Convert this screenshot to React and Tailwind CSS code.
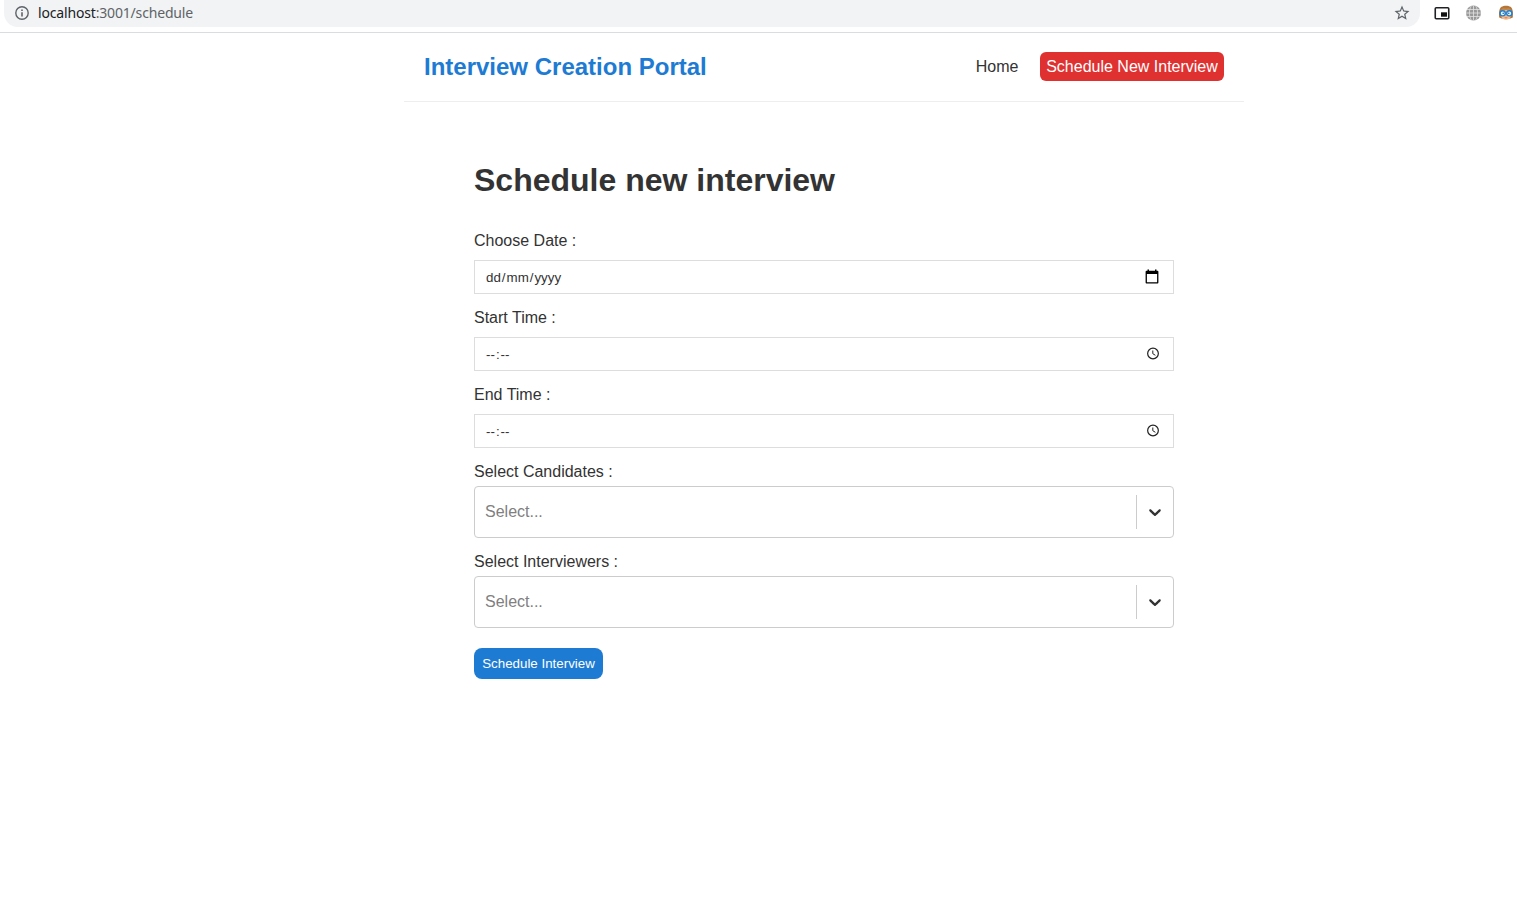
import React from "react";

function InfoIcon() {
  return (
    <svg width="14" height="14" viewBox="0 0 14 14" fill="none">
      <circle cx="7" cy="7" r="6.2" stroke="#5f6368" strokeWidth="1.4" />
      <path d="M7 6.2v4.2M7 3.5v1.5" stroke="#5f6368" strokeWidth="1.6" />
    </svg>
  );
}

function StarIcon() {
  return (
    <svg width="18" height="18" viewBox="0 0 24 24" fill="#5f6368">
      <path d="M22 9.24l-7.19-.62L12 2 9.19 8.63 2 9.24l5.46 4.73L5.82 21 12 17.27 18.18 21l-1.63-7.03L22 9.24zM12 15.4l-3.76 2.27 1-4.28-3.32-2.88 4.38-.38L12 6.1l1.71 4.04 4.38.38-3.32 2.88 1 4.28L12 15.4z" />
    </svg>
  );
}

function PipIcon() {
  return (
    <svg width="16" height="14" viewBox="0 0 16 14" fill="none">
      <rect x="1.25" y="1.75" width="13.5" height="11" rx="1" stroke="#202124" strokeWidth="1.6" />
      <rect x="7" y="6.3" width="6" height="4.4" fill="#111" />
    </svg>
  );
}

function GlobeIcon() {
  return (
    <svg className="-mt-px" width="16" height="16" viewBox="0 0 16 16" fill="none">
      <circle cx="7.5" cy="8" r="7.5" fill="#999" />
      <path
        d="M7.5 .5v15M0 8h15M1 4.500h13M1 11.500h13M5.300 .8C2.800 5 2.800 11 5.300 15.200M9.700 .8c2.500 4.200 2.500 10.200 0 14.400"
        stroke="#e3e3e3"
        strokeWidth="0.8"
      />
    </svg>
  );
}

function AvatarIcon() {
  return (
    <svg width="16" height="16" viewBox="0 0 16 16">
      <path d="M1.200 12.500C.8 8 1 3.500 3.500 1.800 5.500 .3 10.500 .3 12.500 1.800 15 3.500 15.200 8 14.800 12.500L12.500 13.500H3.500Z" fill="#b5763a" />
      <path d="M3 6Q8 3.500 13 6V10.500Q12 14.800 8 14.800T3 10.500Z" fill="#f3b98c" />
      <path d="M2.500 6.500Q4 1.500 8 3.500Q12 1.500 13.500 6.500L8 4.800Z" fill="#c58748" />
      <circle cx="4.700" cy="8.300" r="2.600" fill="#eaf7ff" stroke="#1f7fd0" strokeWidth="1.400" />
      <circle cx="11.300" cy="8.300" r="2.600" fill="#eaf7ff" stroke="#1f7fd0" strokeWidth="1.400" />
      <circle cx="5.200" cy="8.300" r=".8" fill="#1d5f9e" />
      <circle cx="10.800" cy="8.300" r=".8" fill="#1d5f9e" />
      <path d="M6.700 12.500Q8 13.300 9.300 12.500" stroke="#c8644a" strokeWidth="0.700" fill="none" />
    </svg>
  );
}

function CalendarIcon() {
  return (
    <svg className="mr-3.5 mb-px" width="14" height="15" viewBox="0 0 14 15" fill="#000">
      <path fillRule="evenodd" d="M1.500 1.800H2.500V.5H4V1.800H10V.5H11.500V1.800H12.500Q13.400 1.800 13.400 2.700V13.500Q13.400 14.500 12.500 14.500H1.500Q.6 14.500 .6 13.500V2.700Q.6 1.800 1.500 1.800ZM1.900 5V13.300H12.100V5Z" />
    </svg>
  );
}

function ClockIcon() {
  return (
    <svg className="mr-3.5 mb-px" width="12" height="13" viewBox="0 0 12 13" fill="none" stroke="#222">
      <circle cx="6" cy="6.500" r="5.350" strokeWidth="1.200" />
      <path d="M5.800 3.500V6.700L8.400 8.300" strokeWidth="1" />
    </svg>
  );
}

function DateValue() {
  return (
    <span className="flex pt-px">
      <span className="pr-px">dd</span>
      <span>/</span>
      <span className="px-px">mm</span>
      <span>/</span>
      <span className="pl-px">yyyy</span>
    </span>
  );
}

function TimeValue() {
  return (
    <span className="flex pt-px">
      <span className="pr-px">--</span>
      <span>:</span>
      <span className="pl-px">--</span>
    </span>
  );
}

function InputField({ label, icon, children }) {
  return (
    <div className="flex h-[77px] flex-col">
      <label className="h-7 leading-[18px]">{label}</label>
      <div className="flex h-[34px] items-center justify-between border border-[#ddd] pl-[11px] text-[13.333px] leading-[15px]">
        {children}
        {icon}
      </div>
    </div>
  );
}

function SelectField({ label }) {
  return (
    <div className="flex h-[90px] flex-col">
      <label className="h-[23px] leading-[18px]">{label}</label>
      <div className="flex h-[52px] items-center rounded border border-[#ccc]">
        <span className="flex-1 pl-2.5 leading-[18px] text-[#808080]">Select...</span>
        <span className="h-[34px] w-px bg-[#ccc]" />
        <span className="flex w-9 justify-center">
          <svg width="20" height="20" viewBox="0 0 20 20" fill="#333">
            <path d="M4.516 7.548c0.436-0.446 1.043-0.481 1.576 0l3.908 3.747 3.908-3.747c0.533-0.481 1.141-0.446 1.574 0 0.436 0.445 0.408 1.197 0 1.615-0.406 0.418-4.695 4.502-4.695 4.502-0.217 0.223-0.502 0.335-0.787 0.335s-0.570-0.112-0.789-0.335c0 0-4.287-4.084-4.695-4.502s-0.436-1.170 0-1.615z" />
          </svg>
        </span>
      </div>
    </div>
  );
}

export default function App() {
  return (
    <div className="h-[921px] w-[1517px] overflow-hidden bg-white font-['Liberation_Sans',Arial,sans-serif] text-base text-[#333]">
      <div className="flex h-[33px] items-start border-b border-[#dadce0] pl-1">
        <div className="flex h-[27px] w-[1416px] items-center rounded-b-[14px] bg-[#f1f3f4] pr-[9px] pl-[11px]">
          <span className="-mt-px"><InfoIcon /></span>
          <span className="-mt-px ml-[9px] flex-1 font-['Noto_Sans',sans-serif] text-[14px] leading-5 tracking-[-0.17px] text-[#5f6368]">
            <span className="text-[#202124]">localhost</span>:3001/schedule
          </span>
          <span className="-mt-px"><StarIcon /></span>
        </div>
        <div className="flex h-[26px] items-center gap-4 pl-3.5">
          <PipIcon />
          <GlobeIcon />
          <AvatarIcon />
        </div>
      </div>
      <header className="ml-[404px] flex h-[69px] w-[840px] items-center justify-between border-b border-[#eee] px-5">
        <h1 className="text-2xl leading-7 font-bold text-[#1e7bd3]">Interview Creation Portal</h1>
        <nav className="mb-px flex items-center">
          <a className="mr-[21.5px] pt-px leading-[18px]">Home</a>
          <a className="flex h-[29px] w-[184px] items-center justify-center rounded-md bg-[#e03131] pt-px whitespace-nowrap leading-[18px] text-white">
            Schedule New Interview
          </a>
        </nav>
      </header>
      <main className="ml-[474px] w-[700px] pt-[60px]">
        <h2 className="mb-[34px] text-[32px] leading-9 font-bold">Schedule new interview</h2>
        <InputField label="Choose Date :" icon={<CalendarIcon />}><DateValue /></InputField>
        <InputField label="Start Time :" icon={<ClockIcon />}><TimeValue /></InputField>
        <InputField label="End Time :" icon={<ClockIcon />}><TimeValue /></InputField>
        <SelectField label="Select Candidates :" />
        <SelectField label="Select Interviewers :" />
        <button className="mt-[5px] h-[31px] w-[129px] rounded-lg bg-[#1e7bd3] text-[13.333px] leading-[15px] whitespace-nowrap text-white">
          Schedule Interview
        </button>
      </main>
    </div>
  );
}
